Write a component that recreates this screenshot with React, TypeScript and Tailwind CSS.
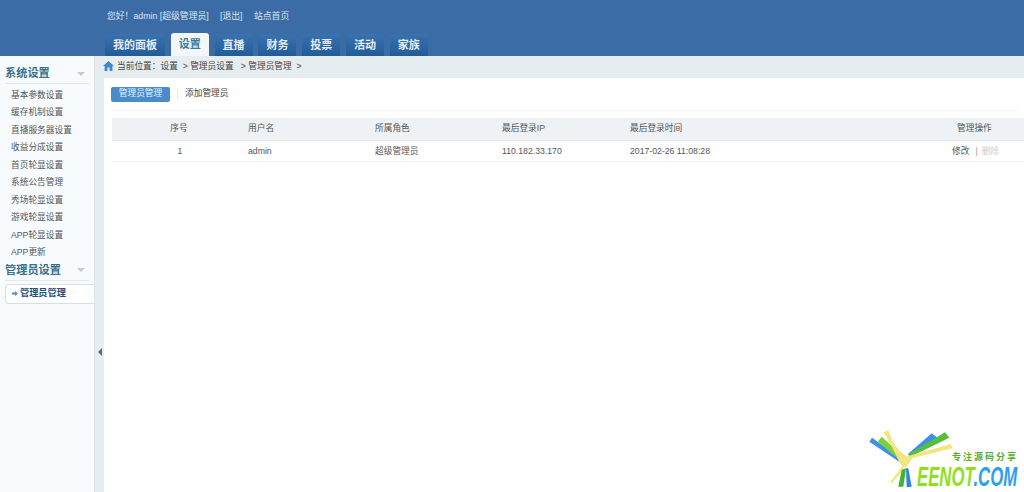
const menu1 = ["基本参数设置","缓存机制设置","直播服务器设置","收益分成设置","首页轮显设置","系统公告管理","秀场轮显设置","游戏轮显设置","APP轮显设置","APP更新"];
const tabs = ["我的面板","设置","直播","财务","投票","活动","家族"];

function Heading({ children }: { children: string }) {
  return (
    <div className="flex items-center justify-between h-[20px] mx-[5px] pr-[4px] border-b border-[#e3e9ec]">
      <span className="text-[11.2px] font-bold text-[#3a7089]">{children}</span>
      <span className="w-0 h-0 border-x-[4px] border-x-transparent border-t-[4px] border-t-[#c4ccd0]" />
    </div>
  );
}

function Logo() {
  return (
    <div className="absolute left-[868px] top-[429px] w-[156px] h-[63px] overflow-hidden">
      <svg className="absolute left-0 top-0" width="100" height="63" viewBox="0 0 100 63">
        <polygon points="1.3,12.7 4,8.7 34,30 33,34" fill="#3f8fe8" />
        <polygon points="9.7,12.7 13.7,7.7 36,28 34,33" fill="#7ccf3a" />
        <polygon points="63.7,4.3 69.3,8.7 42,27 40,25" fill="#3f8fe8" />
        <polygon points="77,3.3 81.3,8.7 42,28 40,25.5" fill="#55c03a" />
        <polygon points="82.7,15 84.7,19.3 45,29 38,38 33.7,37.7 37,28" fill="#f2e680" />
        <path d="M15.3 3.3 L20.3 1 Q26 20 39 27.7 L35 38 Q30 32 28 26 Q21 12 15.3 3.3 Z" fill="#f2e680" />
        <polygon points="33.7,37.7 37,39.3 24,54 22,53.3" fill="#f2e680" />
        <polygon points="33.7,41 38,39.3 35.3,57.7 30.3,57.7" fill="#3fb52e" />
        <polygon points="38,39.3 40.3,39.3 43.7,57.7 38.7,58.3" fill="#2f86dc" />
      </svg>
      <span className="absolute left-[84px] top-[23px] text-[9px] tracking-[2px] leading-[11px] font-bold text-[#5aa92a] whitespace-nowrap">专注源码分享</span>
      <div className="absolute left-[49px] top-[35px] text-[27px] leading-[26px] font-black italic font-['Liberation_Sans'] whitespace-nowrap origin-left scale-x-[0.62]">
        <span className="text-[#8ee01c]">EENOT</span>
        <span className="text-[#2aa0ee]">.COM</span>
      </div>
    </div>
  );
}

export default function App() {
  return (
    <div className="relative w-[1024px] h-[492px] overflow-hidden bg-white text-[#555] font-['Liberation_Sans','Noto_Sans_CJK_SC',sans-serif] text-[8.7px]">
      <header className="h-[56px] bg-[#3b6ca5] flex flex-col pl-[105px]">
        <div className="h-[33px] pt-[9px] pl-[2px] flex items-start text-[#dbe6f2] text-[8.8px] leading-[14px]">
          <span className="w-[113px] whitespace-nowrap">您好！admin [超级管理员]</span>
          <span className="w-[34px]">[退出]</span>
          <span>站点首页</span>
        </div>
        <nav className="flex items-end gap-[5.8px] h-[23px]">
          {tabs.map((t, i) => (
            <div
              key={t}
              className={
                i === 1
                  ? "h-[23px] px-[8px] flex items-center rounded-t-[3px] bg-[#f3f7f9] text-[#3a7a9f] text-[11px] font-bold"
                  : "h-[22px] px-[8px] flex items-center rounded-t-[3px] bg-gradient-to-b from-[#3a72b0] to-[#235a98] text-[#e2ecf5] text-[11px] font-bold"
              }
            >
              {t}
            </div>
          ))}
        </nav>
      </header>
      <div className="flex h-[436px]">
        <aside className="w-[94px] bg-[#f7fbfd] pt-[8px]">
          <Heading>系统设置</Heading>
          <ul className="pl-[11px] mt-[1.5px] text-[#555]">
            {menu1.map((m) => (
              <li key={m} className="h-[17.5px] leading-[18px] whitespace-nowrap">{m}</li>
            ))}
          </ul>
          <Heading>管理员设置</Heading>
          <div className="ml-[5px] mt-[3px] h-[20px] flex items-center pl-[6px] gap-[2px] bg-white border border-r-0 border-[#d5dfe4] rounded-l-[4px] text-[#1d4f7d] font-bold text-[9.2px]">
            <svg width="6" height="5" viewBox="0 0 6 5"><path d="M0 1.5H3V0L6 2.5L3 5V3.5H0Z" fill="#4a90c9" /></svg>
            管理员管理
          </div>
        </aside>
        <div className="w-[10px] bg-[#e6edf0] flex items-start justify-center pt-[292px] border-l border-[#dce4e8]">
          <span className="w-0 h-0 border-y-[4px] border-y-transparent border-r-[4px] border-r-[#5f6a70]" />
        </div>
        <main className="flex-1 flex flex-col">
          <div className="h-[22px] bg-[#e6edf0] flex items-center -ml-[1px] text-[#444] gap-[2px]">
            <svg width="11" height="10" viewBox="0 0 11 10" className="-mt-[3px]"><path d="M5.5 0 L11 5 H9.4 V10 H6.6 V6.5 H4.4 V10 H1.6 V5 H0 Z" fill="#3f86c8" /></svg>
            <span className="ml-[1px] whitespace-pre">当前位置：设置  &gt; 管理员设置   &gt; 管理员管理  &gt;</span>
          </div>
          <div className="flex-1 bg-white">
            <div className="mx-[7px] h-[33px] flex items-center border-b border-[#eef1f3]">
              <span className="h-[15px] w-[59px] flex items-center justify-center rounded-[2px] bg-[#4a8bcb] text-[#e8f1fa]">管理员管理</span>
              <span className="ml-[7px] h-[10px] border-l border-[#e3e7ea]" />
              <span className="ml-[7px] text-[#444]">添加管理员</span>
            </div>
            <table className="mt-[7px] ml-[8px] w-[912px] table-fixed border-collapse text-left">
              <colgroup>
                <col className="w-[136px]" />
                <col className="w-[127px]" />
                <col className="w-[127px]" />
                <col className="w-[128px]" />
                <col className="w-[300px]" />
                <col />
              </colgroup>
              <thead>
                <tr className="h-[22px] bg-[#eef2f5] border-b border-[#e3e8ec]">
                  <th className="font-normal text-center pr-[2px]">序号</th>
                  <th className="font-normal">用户名</th>
                  <th className="font-normal">所属角色</th>
                  <th className="font-normal">最后登录IP</th>
                  <th className="font-normal">最后登录时间</th>
                  <th className="font-normal pl-[27px]">管理操作</th>
                </tr>
              </thead>
              <tbody>
                <tr className="h-[21px] border-b border-[#eceff1]">
                  <td className="text-center pt-[2px]">1</td>
                  <td className="pt-[2px]">admin</td>
                  <td className="pt-[2px]">超级管理员</td>
                  <td className="pt-[2px]">110.182.33.170</td>
                  <td className="pt-[2px]">2017-02-26 11:08:28</td>
                  <td className="pl-[22px] pt-[2px] whitespace-nowrap">修改<span className="ml-[6px] text-[#999]">|</span><span className="ml-[4px] text-[#ccc]">删除</span></td>
                </tr>
              </tbody>
            </table>
          </div>
        </main>
      </div>
      <Logo />
    </div>
  );
}
